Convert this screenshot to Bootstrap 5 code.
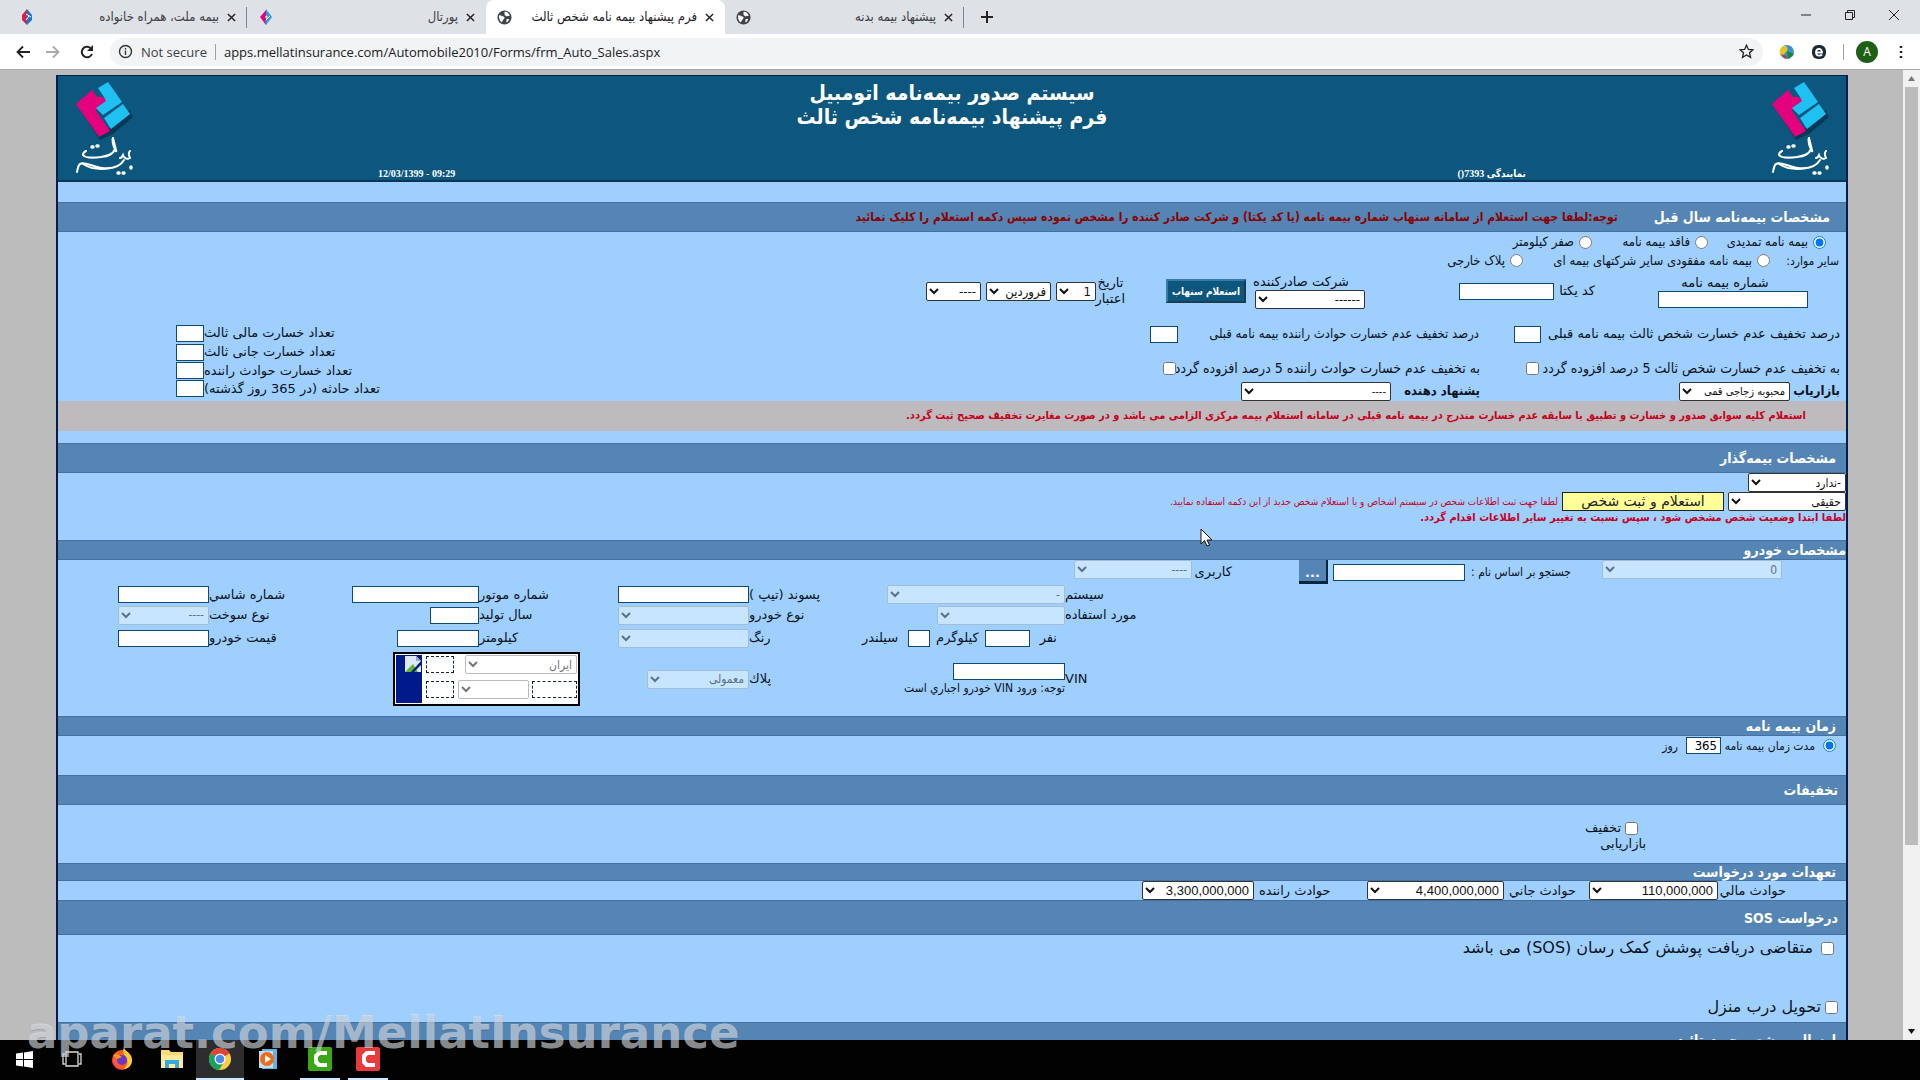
<!DOCTYPE html>
<html lang="fa">
<head>
<meta charset="utf-8">
<meta name="viewport" content="width=device-width, initial-scale=1">
<title>فرم پیشنهاد بیمه نامه شخص ثالث</title>
<link href="https://cdn.jsdelivr.net/npm/bootstrap@5.3.0/dist/css/bootstrap.min.css" rel="stylesheet">
<style>
:root{--fa:"DejaVu Sans",sans-serif;--nar:"DejaVu Sans Condensed","DejaVu Sans",sans-serif;--ui:"Open Sans","Noto Sans","DejaVu Sans Condensed",sans-serif}
body{height:100vh;overflow:hidden;background:#000;font-family:var(--fa);font-size:13px;line-height:16px;color:#0a1420}
button,input,select{font-family:inherit;border-radius:0;margin:0}
/* browser chrome */
.tabstrip{height:34px;background:#dee1e6;padding-left:8px;font:13px/16px var(--nar)}
.btab{width:239px;height:34px;padding:0 10px 0 11px;color:#3c4043;text-decoration:none;border-right:1px solid #80868b;border-image:linear-gradient(transparent 8px,#80868b 8px,#80868b 27px,transparent 27px) 1}
.btab.active{background:#fff;color:#202124;border-radius:8px 8px 0 0;border-image:none;border-color:#fff}
.btab.bare{border-image:none;border-color:transparent}
.btab .ttl{flex:1;min-width:0;white-space:nowrap;overflow:hidden;padding:0 8px}
.plain{background:none;border:0;padding:0;line-height:0;color:#202124}
.toolbar{height:37px;background:#fff;border-bottom:1px solid #aaa;font-family:var(--ui);font-size:13px;color:#3c4043}
.omni{height:28px;border-radius:14px;background:#f1f3f4;padding:0 9px 0 6px}
.omni input{border:0;background:none;outline:0;padding:0;color:#202124;flex:1}
.vsep{width:1px;height:16px;background:#9aa0a6}
.avatar{width:22px;height:22px;border-radius:50%;background:#1e5f14;color:#fff;font-size:12px;line-height:22px;text-align:center}
/* page */
.view{background:#bcbcbc;min-height:0;overflow:hidden}
.sheet{margin:5px 55px 0 56px;border:solid #001f4d;border-width:1px 2px 0;background:#9fcfff}
.banner{background:#0d577e;color:#fff;height:106px;border-bottom:2px solid #0a3558}
.banner h1{font:bold 21px/24px var(--nar);margin:0;padding-top:5px}
.banner .tiny{font:bold 10px/12px "Liberation Serif","DejaVu Sans Condensed",serif;padding:0 244px}
.bhead{background:#5585b5;color:#fff;font:bold 14px/18px var(--nar);padding:0 10px;margin:0;display:flex;align-items:center;border-bottom:1px solid #4472a0;border-top:1px solid #4472a0}
.h30{height:30px}.h20{height:20px}.h18{height:18px}.h35{height:35px}
.gap20{height:20px}.gap12{height:12px}
.gap36{gap:36px}
.warn{color:#8b0000;font-size:12px;font-weight:bold}
.red{color:#c8001e}
.frow{display:grid;align-items:center;justify-content:start;white-space:nowrap}
.tin{height:17px;border:1px solid #0d4a78;background:#fff;padding:0 3px;width:100%;font-size:13px}
select{height:19px;border:1px solid #333;border-radius:2px;background:#fff;font:12px var(--nar);padding:0;width:100%;color:#111}
select:disabled{opacity:1;background:#c7e5ff;border-color:#a3bdd4;color:#5c7186}
input[type=radio],input[type=checkbox]{width:13px;height:13px;flex:none}
.nar12{font-family:var(--nar);font-size:12px}
.nar13{font-family:var(--nar)}
.small10{font:10px/16px var(--nar)}
.bold11{font:bold 11px/14px var(--nar)}
.r1{grid-template-columns:13px 95px 13px 93px 13px 100px;gap:5px;padding-inline-start:20px;height:20px}
.r2{grid-template-columns:64px 13px 224px 13px 100px;gap:5px;padding-inline-start:7px;height:17px}
.r3{grid-template-columns:150px 63px 41px 95px 94px 110px 9px 80px 41px 29px 40px 5px 65px 5px 55px;padding-inline-start:38px;height:44px}
.r3 select{font-size:13px}
.r4{grid-template-columns:299px 27px 35px 301px 28px;padding-inline-start:6px;height:42px}
.r5{grid-template-columns:301px 13px 46px 304px 13px;padding-inline-start:6px;height:26px;font:14px/16px var(--nar)}
.r6{grid-template-columns:50px 111px 199px 89px 150px;padding-inline-start:6px;height:20px;font:bold 13px/16px var(--nar)}
.r6 select{font-size:11px}
.losses{width:240px;margin-inline-end:118px;padding-top:12px}
.losses .tin{width:28px}
.navy{background:#0d577e;color:#fff;border:2px outset #3a7ba5;font:bold 10px var(--nar);height:24px;padding:0}
.grayband{background:#bdbbbd;height:30px;line-height:28px;padding-inline-start:40px}
.yel{width:162px;height:19px;background:#ffff99;border:1px solid #222;font-size:14px;line-height:15px;padding:0;color:#222}
.note2{height:29px}
.r7{grid-template-columns:180px 31px 106px 132px 5px 29px 67px 40px 118px;padding-inline-start:64px;height:25px;align-items:start}
.r7 label,.r7 .tin{margin-top:4px}
.dots{background:#5585b5;color:#fff;border:solid #0a2540;border-width:0 2px 3px 0;height:24px;padding:4px 0 0;line-height:14px;font-weight:bold}
.cgrid{display:grid;grid-template-columns:minmax(0,781fr) minmax(0,180fr) minmax(0,136fr) minmax(0,132fr) minmax(0,138fr) minmax(0,130fr) minmax(0,140fr) minmax(0,151fr);align-items:center;white-space:nowrap}
.cgrid>label{text-align:end}
.w178{width:178px}.w131{width:131px}.w128{width:128px}.w127{width:127px}.w112{width:112px}.w102{width:102px}.w91{width:91px}.w82{width:82px}.w49{width:49px}.w45{width:45px}.w22{width:22px}.w98{width:98px}.w118{width:118px}.w28{width:28px}.w71{width:71px}
.h19{height:19px}.h22{height:22px}.h24{height:24px}.h58{height:58px}
.gap6{gap:6px}
.plate{width:187px;height:54px;background:#fff;border:2px solid #000;grid-column:span 2;justify-self:end;margin-inline-end:44px;padding:1px}
.plate .flag{width:26px;background:#001a8c}
.plate .tin{border:1px dashed #0a2540}
.plate select{background:#fff;border-color:#bbb;color:#777}
.r8{grid-template-columns:13px 86px 35px 20px;gap:8px;padding-inline-start:10px;height:39px;padding-bottom:20px}
.disc{height:58px;padding-top:15px;padding-inline-start:200px}
.r9{grid-template-columns:68px 129px 85px 137px 113px 112px;padding-inline-start:60px;height:19px}
.r9>select+label{padding-inline-end:5px;text-align:end}
.r9 select{font:13px "Liberation Sans",sans-serif}
.sos{height:87px;font-size:16px;line-height:20px;padding:3px 8px 5px}
/* scrollbar */
.sbar{width:17px;background:#f1f1f1;color:#505050;line-height:0}
.sbar .thumb{height:758px;background:#bcbcbc;width:13px}
/* taskbar */
.taskbar{height:40px;background:#020202}
.taskbar button{width:48px;height:40px;background:none;border:0;border-bottom:2px solid transparent;padding:0;line-height:0}
.taskbar .on{background:#2d2d30;border-color:#cfe8fb}
.taskbar .run{width:40px;border-color:#cfe8fb}
.taskbar .off{width:52px}
.wmark{left:27px;bottom:21px;font:bold 45px/52px var(--fa);color:rgba(225,232,238,.62);z-index:5;pointer-events:none;text-shadow:0 1px 1px rgba(0,0,0,.15)}
.cursor{left:1200px;top:458px;z-index:4;line-height:0}
</style>
<script src="https://cdn.jsdelivr.net/npm/bootstrap@5.3.0/dist/js/bootstrap.bundle.min.js"></script>
</head>
<body class="d-flex flex-column m-0">
<svg width="0" height="0" class="position-absolute" aria-hidden="true">
<symbol id="fav" viewBox="0 0 16 16"><path d="M8 0 3 6v5l5 5z" fill="#e21a4a"/><path d="M8 0l5 6v5l-5 5-1-5z" fill="#2474c4"/><path d="M7 5l5 3M7 11l3-4" stroke="#fff" stroke-width="1"/></symbol>
<symbol id="fav2" viewBox="0 0 16 16"><path d="M8 1 2 8l6 8 1-5-2-3 2-3z" fill="#e5007d"/><path d="M8 0l6 8-6 8-1-5 3-3-2-2z" fill="#2d9be0"/><path d="M8 11l4-4" stroke="#fff"/></symbol>
<symbol id="globe" viewBox="0 0 16 16"><circle cx="8" cy="8" r="7.500" fill="#3f4347"/><path d="M2 6c2-1 3 1 5 1 2 1 1 2 0 3-1 0-1 3-2 3C3 12 2 9 2 6zM8 2c2-1 5 1 5.500 4-1 1-2 0-3 1-1-1-3-1-2.500-3zM10 10c2-1 3 0 3 0-1 2-2 3-3 3z" fill="#fff"/></symbol>
<symbol id="x" viewBox="0 0 10 10"><path d="M1 1l8 8M9 1L1 9" stroke="#222" stroke-width="1.600"/></symbol>
<symbol id="mellat" viewBox="0 0 60 98">
<path d="M4 26 26 60l13-6 20-17-3-7-20 18-10 4z" fill="#05324d" opacity=".8"/>
<path d="M2 24 18 10l5 7 6 0 3 4-8 6-2 4 14 20-11 6z" fill="#e5007d"/>
<path d="M24 8 34 2l14 20-19 13-7-7 10-7-2-4z" fill="#1fc0f2"/><path d="M49 24l7 10-19 15-7-11z" fill="#1fc0f2"/>
<g fill="none" stroke="#fff" stroke-linecap="round"><path d="M39 58c-1 4 0 7 2 11-2 6-8 7-14 8-8 1-16 1-18-2 0-2 1-3 3-4" stroke-width="2.200"/><path d="M39 59l3 12" stroke-width="2.500"/><path d="M56 71c-2 2-1 5 0 7-3 2-6 0-7-3-1 2-1 3-3 3M50 80c-4 7-12 9-22 8-9-1-18-7-22-4-2 1-2 4-3 8M9 84c8 5 18 6 28 4" stroke-width="2"/><path d="M18 67h1M23 66h1M44 93h1M49 93h1M57 87v1" stroke-width="3.400"/></g>
</symbol>
</svg>

<nav class="tabstrip d-flex align-items-center">
<a href="#" class="btab d-flex align-items-center"><svg width="16" height="16"><use href="#fav"/></svg><span class="ttl" dir="rtl">بیمه ملت، همراه خانواده</span><svg width="9" height="9"><use href="#x"/></svg></a>
<a href="#" class="btab bare d-flex align-items-center"><svg width="16" height="16"><use href="#fav2"/></svg><span class="ttl" dir="rtl">پورتال</span><svg width="9" height="9"><use href="#x"/></svg></a>
<a href="#" class="btab active d-flex align-items-center"><svg width="15" height="15"><use href="#globe"/></svg><span class="ttl" dir="rtl">فرم پیشنهاد بیمه نامه شخص ثالث</span><svg width="9" height="9"><use href="#x"/></svg></a>
<a href="#" class="btab d-flex align-items-center"><svg width="15" height="15"><use href="#globe"/></svg><span class="ttl" dir="rtl">پیشنهاد بیمه بدنه</span><svg width="9" height="9"><use href="#x"/></svg></a>
<button class="plain ms-3" aria-label="New tab"><svg width="14" height="14"><path d="M7 1v12M1 7h12" stroke="#222" stroke-width="2"/></svg></button>
<div class="ms-auto d-flex align-items-center gap-4 pe-3 me-1 pb-1">
<button class="plain me-2" aria-label="Minimize"><svg width="12" height="12"><path d="M1 6h10" stroke="#222"/></svg></button>
<button class="plain me-2" aria-label="Restore"><svg width="12" height="12" fill="none" stroke="#222"><path d="M1.500 3.500h7v7h-7zM3.500 3.500v-2h7v7h-2"/></svg></button>
<button class="plain" aria-label="Close"><svg width="12" height="12"><path d="M1 1l10 10M11 1L1 11" stroke="#222"/></svg></button>
</div>
</nav>
<div class="toolbar d-flex align-items-center">
<div class="d-flex gap-3 ps-3 pe-3">
<button class="plain" aria-label="Back"><svg width="14" height="14" fill="none" stroke="#222" stroke-width="1.800"><path d="M14 7H2M7 1.500 1.500 7 7 12.500"/></svg></button>
<button class="plain me-1" aria-label="Forward"><svg width="14" height="14" fill="none" stroke="#aaa" stroke-width="1.800"><path d="M0 7h12M7 1.500 12.500 7 7 12.500"/></svg></button>
<button class="plain" aria-label="Reload"><svg width="14" height="14" fill="none" stroke="#222" stroke-width="2"><path d="M12 9a5.300 5.300 0 1 1-1.500-6"/><path d="M13 0v6H7z" fill="#222" stroke="none"/></svg></button>
</div>
<div class="omni d-flex align-items-center flex-grow-1 ps-2">
<svg width="15" height="15" fill="none" stroke="#333" stroke-width="1.400" class="me-2"><circle cx="7.500" cy="7.500" r="6"/><path d="M7.500 6.500V11M7.500 4v1.500"/></svg>
<label for="url">Not secure</label><span class="vsep ms-2 me-2"></span>
<input id="url" value="apps.mellatinsurance.com/Automobile2010/Forms/frm_Auto_Sales.aspx">
<svg width="15" height="15" viewBox="0 0 15 15" fill="none" stroke="#222" stroke-width="1.300"><path d="M7.500 1.200l1.900 4.200 4.600.4-3.500 3 1.100 4.500-4.100-2.400-4 2.400 1-4.500L1 5.800l4.600-.4z"/></svg>
</div>
<div class="d-flex align-items-center ps-2 pe-3 gap-3">
<svg width="16" height="16" class="ms-2"><circle cx="8" cy="8" r="7" fill="#3f8fd8"/><path d="M2 4c4-4 8-1 6 3l-5 5C0 10 0 7 2 4z" fill="#e8c620"/><path d="M1 10l6 5 1-3z" fill="#c33"/><path d="M8 7l7 3-6 5z" fill="#168a24"/></svg>
<svg width="16" height="16"><rect x="1" y="1" width="14" height="14" rx="6" fill="#1d2a35"/><path d="M5 8.500h6C11 3.500 5 4 5 8.500c0 3.500 4 4 6 2" fill="none" stroke="#fff" stroke-width="1.800"/></svg>
<span class="d-flex align-items-center gap-2"><span class="vsep me-1"></span><span class="avatar">A</span></span>
<button class="plain ms-1" aria-label="Menu"><svg width="6" height="16"><path d="M3 2v2M3 7v2M3 12v2" stroke="#222" stroke-width="2.500"/></svg></button>
</div>
</div>

<div class="view d-flex flex-grow-1 position-relative">
<main class="flex-grow-1" dir="rtl"><form class="sheet">
<header class="banner d-flex justify-content-between text-center">
<svg width="60" height="98" class="mt-1 me-3"><use href="#mellat"/></svg>
<div class="flex-grow-1 d-flex flex-column justify-content-between">
<h1>سیستم صدور بیمه‌نامه اتومبیل<br>فرم پیشنهاد بیمه‌نامه شخص ثالث</h1>
<div class="d-flex justify-content-between tiny"><span>نمایندگی 7393()</span><span dir="ltr">12/03/1399 - 09:29</span></div>
</div>
<svg width="60" height="98" class="mt-1 ms-3"><use href="#mellat"/></svg>
</header>
<div class="gap20"></div>
<h2 class="bhead h30 px-3 gap36"><span>مشخصات بیمه‌نامه سال قبل</span><span class="warn">توجه:لطفا جهت استعلام از سامانه سنهاب شماره بیمه نامه (یا کد یکتا) و شرکت صادر کننده را مشخص نموده سپس دکمه استعلام را کلیک نمائید</span></h2>
<div class="frow r1 nar13">
<input type="radio" name="k" id="k1" checked><label for="k1">بیمه نامه تمدیدی</label><input type="radio" name="k" id="k2"><label for="k2">فاقد بیمه نامه</label><input type="radio" name="k" id="k3"><label for="k3">صفر کیلومتر</label></div>
<div class="frow r2 nar13"><span class="nar12">سایر موارد:</span><input type="radio" name="k" id="k4"><label for="k4">بیمه نامه مفقودی سایر شرکتهای بیمه ای</label><input type="radio" name="k" id="k5"><label for="k5">پلاک خارجی</label></div>
<div class="frow r3">
<div class="text-center"><label for="pn" class="d-block me-3">شماره بیمه نامه</label><input id="pn" class="tin d-block"></div><span></span>
<label for="uc">کد یکتا</label><input id="uc" class="tin"><span></span>
<div><label for="co" class="d-block text-start me-3">شرکت صادرکننده</label><select id="co" class="d-block"><option>------</option></select></div><span></span>
<button type="button" class="navy">استعلام سنهاب</button><span></span>
<label for="dd" class="text-center">تاریخ<br>اعتبار</label><select id="dd"><option>1</option></select><span></span><select aria-label="ماه"><option>فروردین</option></select><span></span><select aria-label="سال"><option>----</option></select></div>
<div class="d-flex justify-content-between">
<div>
<div class="frow r4"><label for="p1">درصد تخفیف عدم خسارت شخص ثالث بیمه نامه قبلی</label><input id="p1" class="tin"><span></span><label for="p2" class="nar13">درصد تخفیف عدم خسارت حوادث راننده بیمه نامه قبلی</label><input id="p2" class="tin"></div>
<div class="frow r5"><label for="a1">به تخفیف عدم خسارت شخص ثالث 5 درصد افزوده گردد</label><input type="checkbox" id="a1"><span></span><label for="a2" class="nar13 fs-13">به تخفیف عدم خسارت حوادث راننده 5 درصد افزوده گردد</label><input type="checkbox" id="a2"></div>
<div class="frow r6"><label for="mk">بازاریاب</label><select id="mk"><option>محبوبه زجاجی قمی</option></select><span></span><label for="pr">پشنهاد دهنده</label><select id="pr"><option>----</option></select></div>
</div>
<div class="losses d-flex">
<div class="d-flex flex-column justify-content-between align-items-end flex-grow-1 pb-1"><label for="l1">تعداد خسارت مالی ثالث</label><label for="l2">تعداد خسارت جانی ثالث</label><label for="l3">تعداد خسارت حوادث راننده</label><label for="l4">تعداد حادثه (در 365 روز گذشته)</label></div>
<div class="d-flex flex-column justify-content-between pb-1"><input id="l1" class="tin"><input id="l2" class="tin"><input id="l3" class="tin"><input id="l4" class="tin"></div>
</div>
</div>
<div class="grayband"><span class="red bold11">استعلام کلیه سوابق صدور و خسارت و تطبیق با سابقه عدم خسارت مندرج در بیمه نامه قبلی در سامانه استعلام بیمه مرکزی الزامی می باشد و در صورت مغایرت تخفیف صحیح ثبت گردد.</span></div>
<div class="gap12"></div>
<h2 class="bhead h30">مشخصات بیمه‌گذار</h2>
<select class="w98 d-block" aria-label="کد اشتراک"><option>-ندارد</option></select>
<div class="d-flex align-items-center gap-1"><select class="w118" aria-label="نوع شخص"><option>حقیقی</option></select><button type="button" class="yel">استعلام و ثبت شخص</button><span class="red small10">لطفا جهت ثبت اطلاعات شخص در سیستم اشخاص و یا استعلام شخص جدید از این دکمه استفاده نمایید.</span></div>
<div class="red bold11 note2">لطفا ابتدا وضعیت شخص مشخص شود ، سپس نسبت به تغییر سایر اطلاعات اقدام گردد.</div>
<h2 class="bhead h20 px-0">مشخصات خودرو</h2>
<div class="frow r7"><select disabled aria-label="کد خودرو"><option>0</option></select><span></span><label for="sn" class="nar12">جستجو بر اساس نام :</label><input id="sn" class="tin"><span></span><button type="button" class="dots">...</button><span></span><label for="us">کاربری</label><select id="us" disabled><option>----</option></select></div>
<div class="cgrid h19"><label for="c1">سیستم</label><div><select id="c1" class="w178" disabled><option>-</option></select></div><label for="c2">پسوند (تیپ )</label><div><input id="c2" class="tin w131"></div><label for="c3">شماره موتور</label><div><input id="c3" class="tin w127"></div><label for="c4">شماره شاسي</label><div><input id="c4" class="tin w91"></div></div>
<div class="cgrid h22"><label for="c5">مورد استفاده</label><div><select id="c5" class="w128" disabled></select></div><label for="c6">نوع خودرو</label><div><select id="c6" class="w131" disabled></select></div><label for="c7">سال تولید</label><div><input id="c7" class="tin w49"></div><label for="c8">نوع سوخت</label><div><select id="c8" class="w91" disabled><option>----</option></select></div></div>
<div class="cgrid h24"><span></span><div class="d-flex align-items-center gap6"><label for="n1" class="me-2 ms-1">نفر</label><input id="n1" class="tin w45 flex-shrink-0"><label for="n2">کیلوگرم</label><input id="n2" class="tin w22 flex-shrink-0"><span class="me-1">سیلندر</span></div><label for="c9">رنگ</label><div><select id="c9" class="w131" disabled></select></div><label for="c10">کیلومتر</label><div><input id="c10" class="tin w82"></div><label for="c11">قیمت خودرو</label><div><input id="c11" class="tin w91"></div></div>
<div class="cgrid h58 mb-2"><label for="vin">VIN</label><div><input id="vin" class="tin w112 d-block"><span class="nar12">توجه: ورود VIN خودرو اجباري است</span></div><label for="pk">پلاك</label><div><select id="pk" class="w102" disabled><option>معمولی</option></select></div>
<div class="plate d-flex justify-content-between"><div class="d-flex flex-column justify-content-between flex-grow-1 ps-1"><div class="d-flex justify-content-between align-items-center"><select disabled aria-label="کشور" class="w112"><option>ایران</option></select><input class="tin w28" aria-label="سری"></div><div class="d-flex justify-content-between align-items-center pb-1"><input class="tin w45" aria-label="پلاک 1"><select disabled aria-label="حرف" class="w71"></select><input class="tin w28" aria-label="پلاک 2"></div></div>
<div class="flag"><svg width="18" height="18" class="float-end"><path d="M1 1h11l5 5v11H1z" fill="#dfe9f5"/><path d="M12 1v5h5z" fill="#9ab"/><path d="M1 17l8-8 5 8z" fill="#5fb336"/><path d="M17 6 7 17h3L18 9z" fill="#001a8c"/></svg></div></div></div>
<h2 class="bhead h20">زمان بیمه نامه</h2>
<div class="frow r8 nar12"><input type="radio" id="tm" checked><label for="tm">مدت زمان بیمه نامه</label><input class="tin" value="365" aria-label="روز"><span>روز</span></div>
<h2 class="bhead h30 px-2">تخفیفات</h2>
<div class="disc"><div class="d-flex align-items-center gap-1 pe-2"><input type="checkbox" id="ds"><label for="ds">تخفیف</label></div><div>بازاریابی</div></div>
<h2 class="bhead h18">تعهدات مورد درخواست</h2>
<div class="frow r9"><label for="m1">حوادث مالي</label><select id="m1"><option>110,000,000</option></select><label for="m2">حوادث جاني</label><select id="m2"><option>4,400,000,000</option></select><label for="m3">حوادث راننده</label><select id="m3"><option>3,300,000,000</option></select></div>
<h2 class="bhead h35 px-2">درخواست SOS</h2>
<div class="sos d-flex flex-column justify-content-between"><div class="d-flex align-items-center gap-2 pe-1"><input type="checkbox" id="s1"><label for="s1">متقاضی دریافت پوشش کمک رسان (SOS) می باشد</label></div><div class="d-flex align-items-center gap-1"><input type="checkbox" id="s2"><label for="s2">تحویل درب منزل</label></div></div>
<h2 class="bhead h35">ارسال به شعبه جهت تائید</h2>
</form></main>
<div class="sbar d-flex flex-column align-items-center"><svg width="17" height="17"><path d="M5 11h7l-3.500-5z" fill="#777"/></svg><div class="thumb"></div><svg width="17" height="17" class="mt-auto"><path d="M5 6h7l-3.500 5z" fill="#111"/></svg></div>
<svg class="cursor position-absolute" width="13" height="20" viewBox="0 0 13 20"><path d="M1 1v15l3.500-3.500L7 18l2.500-1L7 12h5z" fill="#fff" stroke="#111"/></svg>
</div>

<footer class="taskbar d-flex">
<button aria-label="Start"><svg width="17" height="17" fill="#fff"><path d="M0 2.500 7 1.500V8H0zM8 1.400 17 0v8H8zM0 9h7v6.500L0 14.500zM8 9h9v8l-9-1.400z"/></svg></button>
<button aria-label="Task View"><svg width="20" height="18" fill="none" stroke="#ddd" stroke-width="1.300"><path d="M4 2h12v14H4zM3 4H1v10h2M17 4h2v10h-2"/></svg></button>
<button class="off" aria-label="Firefox"><svg width="24" height="24"><circle cx="12" cy="13" r="10" fill="#ff5a2c"/><path d="M14 0c1 5 8 6 8 13s-6 9-8 9c3-3 5-8 2-12-2-2-4-5-2-10z" fill="#ffd02c"/><path d="M2 9c0 9 5 14 12 13-7 3-13-4-12-13z" fill="#e31587"/><circle cx="12" cy="13" r="5" fill="#6a37c8"/><path d="M3 8c4-2 6 0 9 2l-5 2z" fill="#ff9a1f"/></svg></button>
<button aria-label="Explorer"><svg width="24" height="20"><path d="M1 1h8l2 2h12v16H1z" fill="#f7d978"/><path d="M1 6h22v13H1z" fill="#ffe99a"/><path d="M5 11h14v8h-4v-4H9v4H5z" fill="#35a9e0"/></svg></button>
<button class="on" aria-label="Chrome"><svg width="24" height="24" viewBox="0 0 24 24"><circle cx="12" cy="12" r="11" fill="#ffcd40"/><path d="M12 12 2.500 6.500a11 11 0 0 1 19 0z" fill="#df4333"/><path d="M12 12 2.500 6.500A11 11 0 0 0 11 23l5-8z" fill="#17a05e"/><circle cx="12" cy="12" r="5.500" fill="#fff"/><circle cx="12" cy="12" r="4.300" fill="#4a8af4"/></svg></button>
<button aria-label="Media Player"><svg width="22" height="22"><path d="M5 1h15v20H5z" fill="#5fb4e4"/><path d="M2 3h14v17H2z" fill="#bfe0f3"/><circle cx="10" cy="11" r="7" fill="#f06a1a"/><path d="M8 7v8l6-4z" fill="#fff"/></svg></button>
<button class="run ms-2 me-2" aria-label="Camtasia"><svg width="24" height="24"><rect width="24" height="24" rx="2" fill="#3aa816"/><path d="M19 4h-9L6 8v8l4 4h9v-4h-7l-2-2v-4l2-2h7z" fill="#fff"/></svg></button>
<button class="run" aria-label="Recorder"><svg width="24" height="24"><rect width="24" height="24" rx="2" fill="#e93a3e"/><path d="M19 4h-9L6 8v8l4 4h9v-4h-7l-2-2v-4l2-2h7z" fill="#fff"/></svg></button>
</footer>
<div class="wmark position-absolute">aparat.com/MellatInsurance</div>
</body>
</html>
